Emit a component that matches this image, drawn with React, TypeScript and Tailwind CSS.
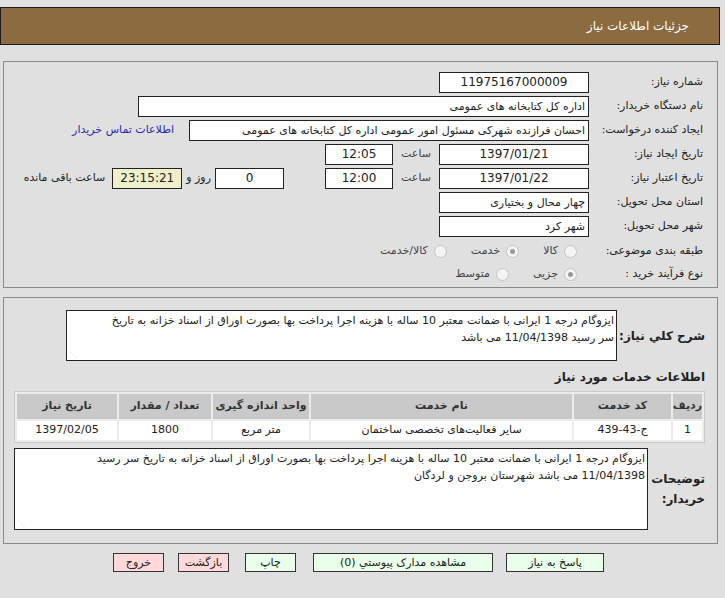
import React from 'react';

const Field = ({ w, children, center = false, bg = 'bg-white' }: { w: string; children?: React.ReactNode; center?: boolean; bg?: string }) => (
  <div className={`${w} h-[21px] ${bg} border border-[#222] px-[3px] leading-[19px] whitespace-nowrap overflow-hidden ${center ? 'text-center text-[12px]' : 'text-right'}`}>
    {children}
  </div>
);

const Radio = ({ checked, label }: { checked?: boolean; label: string }) => (
  <span className="flex items-center gap-[6px]">
    <span className="w-[13px] h-[13px] rounded-full border border-[#c4c4c4] bg-[#f4f4f4] flex items-center justify-center">
      {checked && <span className="w-[5px] h-[5px] rounded-full bg-[#9a9a9a]" />}
    </span>
    <span className="text-[#444]">{label}</span>
  </span>
);

const Row = ({ label, children, h = 'h-[24px]' }: { label: string; children: React.ReactNode; h?: string }) => (
  <div className={`flex items-center ${h}`}>
    <div className="w-[114px] shrink-0 text-right text-[#222] whitespace-nowrap">{label}</div>
    <div className="flex items-center">{children}</div>
  </div>
);

const services = [
  { row: '1', code: 'ج-43-439', name: 'سایر فعالیت‌های تخصصی ساختمان', unit: 'متر مربع', qty: '1800', date: '1397/02/05' },
];

export default function App() {
  return (
    <div dir="ltr" className="min-h-[598px] bg-[#e0e0e0] text-[11px] text-[#222]" style={{ fontFamily: '"DejaVu Sans", Tahoma, sans-serif' }}>
      <div dir="rtl" className="w-[720px] pt-[7px]">
        {/* header */}
        <div className="h-[38px] bg-[#8b6b3f] border border-[#1a1a1a] flex items-center pr-[30px] text-white text-[12px]">
          جزئیات اطلاعات نیاز
        </div>

        {/* main info */}
        <div className="mt-[16px] mr-[2px] ml-[3px] border border-[#8a8a8a] pt-[8px] pb-[3px] pr-[14px]">
          <Row label="شماره نیاز:">
            <Field w="w-[150px]" center>11975167000009</Field>
          </Row>
          <Row label="نام دستگاه خریدار:">
            <Field w="w-[451px]">اداره کل کتابخانه های عمومی</Field>
          </Row>
          <Row label="ایجاد کننده درخواست:">
            <Field w="w-[400px]">احسان فرازنده شهرکی مسئول امور عمومی اداره کل کتابخانه های عمومی</Field>
            <a className="mr-[15px] text-[#2a2ab0] whitespace-nowrap">اطلاعات تماس خریدار</a>
          </Row>
          <Row label="تاریخ ایجاد نیاز:">
            <Field w="w-[150px]" center>1397/01/21</Field>
            <span className="w-[46px] text-center text-[#444]">ساعت</span>
            <Field w="w-[68px]" center>12:05</Field>
          </Row>
          <Row label="تاریخ اعتبار نیاز:">
            <Field w="w-[150px]" center>1397/01/22</Field>
            <span className="w-[46px] text-center text-[#444]">ساعت</span>
            <Field w="w-[68px]" center>12:00</Field>
            <div className="mr-[41px]">
              <Field w="w-[69px]" center>0</Field>
            </div>
            <span className="mx-[4px] whitespace-nowrap">روز و</span>
            <Field w="w-[70px]" center bg="bg-[#efefc9]">23:15:21</Field>
            <span className="mr-[7px] whitespace-nowrap">ساعت باقی مانده</span>
          </Row>
          <Row label="استان محل تحویل:">
            <Field w="w-[150px]">چهار محال و بختیاری</Field>
          </Row>
          <Row label="شهر محل تحویل:">
            <Field w="w-[150px]">شهر کرد</Field>
          </Row>
          <Row label="طبقه بندی موضوعی:" h="h-[26px]">
            <div className="flex items-center gap-[24px] mr-[12px]">
              <Radio label="کالا" />
              <Radio checked label="خدمت" />
              <Radio label="کالا/خدمت" />
            </div>
          </Row>
          <Row label="نوع فرآیند خرید :" h="h-[20px]">
            <div className="flex items-center gap-[24px] mr-[12px]">
              <Radio checked label="جزیی" />
              <Radio label="متوسط" />
            </div>
          </Row>
        </div>

        {/* description + services */}
        <div className="mt-[9px] mr-[2px] ml-[3px] border border-[#8a8a8a] pt-[12px] pb-[13px] pr-[12px] pl-[10px]">
          <div className="flex items-center">
            <div className="w-[88px] shrink-0 text-right font-bold text-[12px] whitespace-nowrap">شرح کلي نیاز:</div>
            <div className="w-[551px] h-[51px] bg-white border border-[#222] px-[2px] pt-[1px] leading-[17px] text-right relative">
              ایزوگام درجه 1 ایرانی با ضمانت معتبر 10 ساله با هزینه اجرا پرداخت بها بصورت اوراق از اسناد خزانه به تاریخ
              <br />
              سر رسید 11/04/1398 می باشد
              <span className="absolute left-[3px] bottom-[1px] text-[7px] leading-none text-[#bbb]">⋰</span>
            </div>
          </div>

          <div className="mt-[7px] font-bold text-[12px]">اطلاعات خدمات مورد نیاز</div>

          <table className="mt-[5px] w-[691px] table-fixed border-separate border-spacing-[2px] border border-[#c8c8c8] bg-[#ececec] text-[11px] whitespace-nowrap">
            <thead>
              <tr className="h-[25px]">
                <th className="w-[29px] bg-[#c9c9c9] font-bold text-[#333]">ردیف</th>
                <th className="w-[97px] bg-[#c9c9c9] font-bold text-[#333]">کد خدمت</th>
                <th className="bg-[#c9c9c9] font-bold text-[#333]">نام خدمت</th>
                <th className="w-[96px] bg-[#c9c9c9] font-bold text-[#333]">واحد اندازه گیری</th>
                <th className="w-[92px] bg-[#c9c9c9] font-bold text-[#333]">تعداد / مقدار</th>
                <th className="w-[100px] bg-[#c9c9c9] font-bold text-[#333]">تاریخ نیاز</th>
              </tr>
            </thead>
            <tbody>
              {services.map((s) => (
                <tr key={s.row} className="h-[19px]">
                  <td className="bg-white text-center">{s.row}</td>
                  <td className="bg-white text-center">{s.code}</td>
                  <td className="bg-white text-center">{s.name}</td>
                  <td className="bg-white text-center">{s.unit}</td>
                  <td className="bg-white text-center">{s.qty}</td>
                  <td className="bg-white text-center">{s.date}</td>
                </tr>
              ))}
            </tbody>
          </table>

          <div className="mt-[5px] flex items-center">
            <div className="w-[57px] shrink-0 text-right font-bold text-[12px] leading-[20px]">توضیحات خریدار:</div>
            <div className="w-[636px] h-[82px] bg-white border border-[#222] px-[2px] pt-[1px] leading-[17px] text-right relative">
              ایزوگام درجه 1 ایرانی با ضمانت معتبر 10 ساله با هزینه اجرا پرداخت بها بصورت اوراق از اسناد خزانه به تاریخ سر رسید
              <br />
              11/04/1398 می باشد شهرستان بروجن و لردگان
              <span className="absolute left-[3px] bottom-[1px] text-[7px] leading-none text-[#bbb]">⋰</span>
            </div>
          </div>
        </div>

        {/* buttons */}
        <div className="mt-[9px] flex items-center pr-[116px]">
          <button className="w-[98px] h-[19px] bg-[#eaffea] border border-[#333] leading-none">پاسخ به نیاز</button>
          <button className="mr-[13px] w-[180px] h-[19px] bg-[#eaffea] border border-[#333] leading-none">مشاهده مدارک پیوستي (0)</button>
          <button className="mr-[17px] w-[51px] h-[19px] bg-[#eaffea] border border-[#333] leading-none">چاپ</button>
          <button className="mr-[16px] w-[51px] h-[19px] bg-[#ffd9d9] border border-[#333] leading-none">بازگشت</button>
          <button className="mr-[14px] w-[51px] h-[19px] bg-[#ffd9d9] border border-[#333] leading-none">خروج</button>
        </div>
      </div>
    </div>
  );
}
